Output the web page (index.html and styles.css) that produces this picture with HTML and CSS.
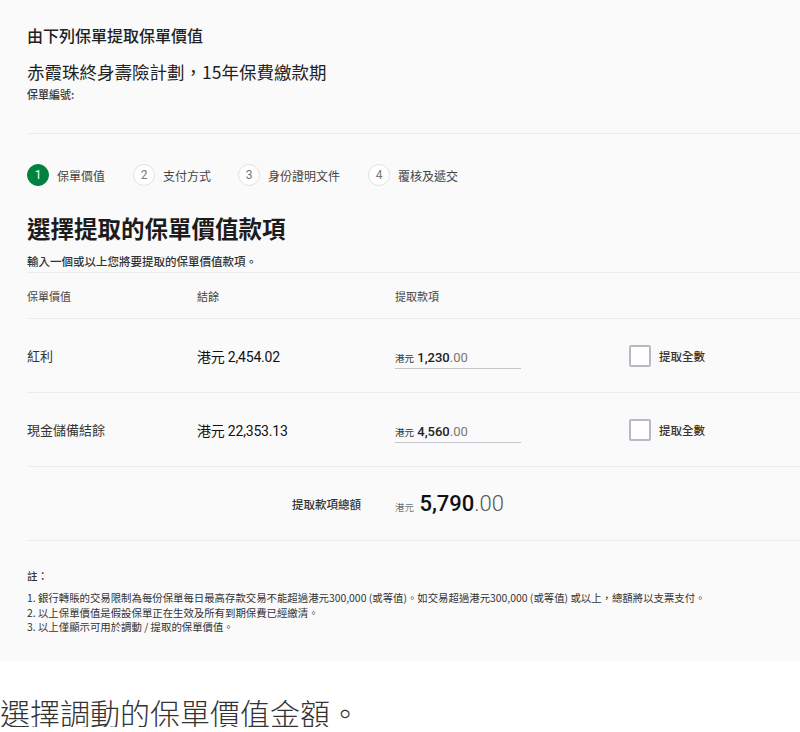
FILE: index.html
```html
<!DOCTYPE html>
<html lang="zh-Hant">

<head>
  <meta charset="UTF-8">
  <title>提取保單價值</title>
  <link rel="stylesheet" href="styles.css">
</head>

<body>
  <div class="panel">
    <h2 class="from-title">由下列保單提取保單價值</h2>
    <div class="plan-name">赤霞珠終身壽險計劃，15年保費繳款期</div>
    <div class="policy-no">保單編號:</div>

    <div class="steps">
      <div class="step active"><span class="num">1</span>保單價值</div>
      <div class="step"><span class="num">2</span>支付方式</div>
      <div class="step"><span class="num">3</span>身份證明文件</div>
      <div class="step"><span class="num">4</span>覆核及遞交</div>
    </div>

    <h1 class="heading">選擇提取的保單價值款項</h1>
    <p class="sub">輸入一個或以上您將要提取的保單價值款項。</p>

    <div class="table">
      <div class="row head">
        <div>保單價值</div>
        <div>結餘</div>
        <div>提取款項</div>
        <div></div>
      </div>
      <div class="row">
        <div class="name">紅利</div>
        <div class="balance">港元 2,454.02</div>
        <div><span class="amount"><small>港元</small> <b>1,230</b>.00</span></div>
        <label class="all"><span class="box"></span>提取全數</label>
      </div>
      <div class="row">
        <div class="name">現金儲備結餘</div>
        <div class="balance">港元 22,353.13</div>
        <div><span class="amount"><small>港元</small> <b>4,560</b>.00</span></div>
        <label class="all"><span class="box"></span>提取全數</label>
      </div>
      <div class="row total">
        <div></div>
        <div class="total-label">提取款項總額</div>
        <div class="total-value"><small>港元</small> <b>5,790</b>.00</div>
        <div></div>
      </div>
    </div>

    <div class="notes">
      <div class="notes-title">註：</div>
      <ol>
        <li>1. 銀行轉賬的交易限制為每份保單每日最高存款交易不能超過港元300,000 (或等值)。如交易超過港元300,000 (或等值) 或以上，總額將以支票支付。</li>
        <li>2. 以上保單價值是假設保單正在生效及所有到期保費已經繳清。</li>
        <li>3. 以上僅顯示可用於調動 / 提取的保單價值。</li>
      </ol>
    </div>
  </div>

  <p class="caption">選擇調動的保單價值金額。</p>
</body>

</html>
```

FILE: styles.css
```css
body {
  margin: 0;
  font-family: "Noto Sans CJK TC", "Noto Sans", sans-serif;
  color: #333;
  background-color: #fff;
}

.panel {
  background-color: #fafafa;
  padding: 23px 0 27px 27px;
}

.from-title {
  margin: 0;
  font-size: 16px;
  line-height: 24px;
  font-weight: 500;
  color: #222;
}

.plan-name {
  margin-top: 12px;
  font-size: 17.5px;
  line-height: 26px;
  color: #222;
}

.policy-no {
  margin-top: 1px;
  font-size: 11px;
  line-height: 16px;
  font-weight: 500;
  padding-bottom: 31px;
  border-bottom: 1px solid #ececec;
}

/* steps */
.steps {
  display: flex;
  margin-top: 30px;
  height: 22px;
}

.step {
  display: flex;
  align-items: center;
  font-size: 12px;
  color: #444;
}

.step:nth-child(1) { width: 106px; }
.step:nth-child(2) { width: 105px; }
.step:nth-child(3) { width: 130px; }

.step .num {
  width: 20px;
  height: 20px;
  border: 1px solid #e2e2e2;
  border-radius: 50%;
  background-color: #fff;
  display: flex;
  justify-content: center;
  align-items: center;
  font-family: Roboto, sans-serif;
  font-size: 12px;
  color: #777;
  margin-right: 8px;
}

.step.active .num {
  background-color: #00813f;
  border-color: #00813f;
  color: #fff;
}

.heading {
  margin: 26px 0 0;
  font-size: 23.5px;
  line-height: 32px;
  font-weight: bold;
  color: #1c1c1c;
}

.sub {
  margin: 9px 0 0;
  font-size: 11.5px;
  line-height: 16px;
  font-weight: 500;
  padding-bottom: 3px;
  border-bottom: 1px solid #ececec;
}

/* table */
.row {
  display: grid;
  grid-template-columns: 170px 198px 234px 1fr;
  align-items: center;
  height: 73px;
  border-bottom: 1px solid #ececec;
}

.row.head {
  height: 45px;
  font-size: 11px;
  color: #444;
}

.name {
  font-size: 13px;
}

.balance {
  font-family: Roboto, "Noto Sans CJK TC", sans-serif;
  font-size: 14px;
  letter-spacing: -0.2px;
  color: #111;
}

.amount {
  display: inline-block;
  width: 126px;
  padding-bottom: 3px;
  border-bottom: 1px solid #c4c4cc;
  font-family: Roboto, "Noto Sans CJK TC", sans-serif;
  font-size: 13px;
  color: #777;
  margin-top: 8px;
}

.amount small,
.total-value small {
  font-size: 9.5px;
  color: #333;
}

.amount b {
  font-weight: 500;
  color: #222;
}

.all {
  display: flex;
  align-items: center;
  font-size: 11.5px;
  font-weight: 500;
  color: #333;
}

.box {
  width: 18px;
  height: 18px;
  border: 2px solid #b9b9c6;
  border-radius: 2px;
  background-color: #fff;
  margin-right: 8px;
}

.row.total {
  height: 73px;
}

.total-label {
  text-align: right;
  padding-right: 34px;
  font-size: 11.5px;
  font-weight: 500;
  color: #333;
}

.total-value {
  font-family: Roboto, "Noto Sans CJK TC", sans-serif;
  font-size: 22px;
  color: #555;
  font-weight: 300;
}

.total-value b {
  font-weight: 500;
  color: #111;
}

/* notes */
.notes {
  margin-top: 28px;
  font-size: 10.4px;
  color: #333;
}

.notes-title {
  font-weight: 500;
  line-height: 14px;
}

.notes ol {
  list-style: none;
  margin: 8px 0 0;
  padding: 0;
}

.notes li {
  line-height: 14.5px;
}

.caption {
  margin: 35px 0 0;
  font-size: 30px;
  line-height: 30px;
  font-weight: 300;
  color: #333;
}
```
